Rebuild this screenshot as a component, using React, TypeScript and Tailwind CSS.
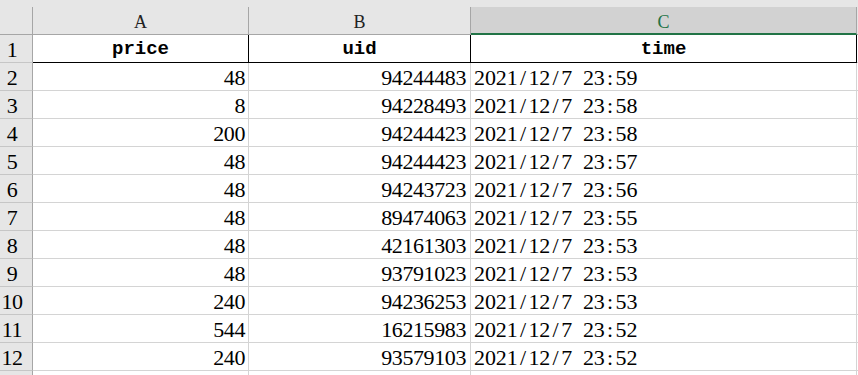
const rows: [number, number, string][] = [
  [48, 94244483, '2021/12/7 23:59'],
  [8, 94228493, '2021/12/7 23:58'],
  [200, 94244423, '2021/12/7 23:58'],
  [48, 94244423, '2021/12/7 23:57'],
  [48, 94243723, '2021/12/7 23:56'],
  [48, 89474063, '2021/12/7 23:55'],
  [48, 42161303, '2021/12/7 23:53'],
  [48, 93791023, '2021/12/7 23:53'],
  [240, 94236253, '2021/12/7 23:53'],
  [544, 16215983, '2021/12/7 23:52'],
  [240, 93579103, '2021/12/7 23:52'],
]

// SimSun-like half-width spacing for date strings
function HalfWidth({ text }: { text: string }) {
  return (
    <>
      {text.split('').map((c, i) => (
        <span key={i} className="inline-block w-[10.9px] text-center whitespace-pre">
          {c}
        </span>
      ))}
    </>
  )
}

const serif = "font-['Liberation_Serif',serif]"

export default function App() {
  return (
    <div className={`w-[858px] h-[375px] overflow-hidden bg-white text-black ${serif}`}>
      <div className="h-[7px] bg-[#e6e6e6]" />
      <div className="grid grid-cols-[33px_216px_222px_386px_1fr]">
        {/* column headers */}
        <div className="h-[28px] bg-[#e6e6e6] border-r border-b border-[#a6a6a6]" />
        <div className="h-[28px] bg-[#e6e6e6] border-r border-b border-[#a6a6a6] flex items-center justify-center pt-[4px] text-[18px] text-[#222]">
          A
        </div>
        <div className="h-[28px] bg-[#e6e6e6] border-r border-b border-[#a6a6a6] flex items-center justify-center pt-[4px] text-[18px] text-[#222]">
          B
        </div>
        <div className="h-[28px] bg-[#d2d2d2] border-r border-r-[#a6a6a6] border-b-2 border-b-[#217346] flex items-center justify-center pt-[5px] text-[18px] text-[#217346]">
          C
        </div>
        <div className="h-[28px] bg-[#e6e6e6] border-b border-[#a6a6a6]" />

        {/* row 1: field names */}
        <div className="h-[28px] bg-[#e6e6e6] border-r border-r-[#a6a6a6] border-b border-b-[#c6c6c6] flex items-center justify-center pr-[8px] pt-[2px] text-[22px] tracking-[-0.4px]">
          1
        </div>
        {['price', 'uid', 'time'].map((h) => (
          <div
            key={h}
            className="h-[28px] border-r border-b border-black flex items-center justify-center pt-[2px] font-['Liberation_Mono',monospace] font-bold text-[19px]"
          >
            {h}
          </div>
        ))}
        <div className="h-[28px] border-b border-[#d4d4d4]" />

        {rows.map(([price, uid, time], i) => (
          <div key={i} className="contents">
            <div className="h-[28px] bg-[#e6e6e6] border-r border-r-[#a6a6a6] border-b border-b-[#c6c6c6] flex items-center justify-center pr-[8px] pt-[2px] text-[22px] tracking-[-0.4px]">
              {i + 2}
            </div>
            <div className="h-[28px] border-r border-b border-[#d4d4d4] flex items-center justify-end pr-[3px] pt-[2px] text-[22px] tracking-[-0.4px]">
              {price}
            </div>
            <div className="h-[28px] border-r border-b border-[#d4d4d4] flex items-center justify-end pr-[4px] pt-[2px] text-[22px] tracking-[-0.4px]">
              {uid}
            </div>
            <div className="h-[28px] border-r border-b border-[#d4d4d4] flex items-center pl-[3px] pt-[2px] text-[22px]">
              <HalfWidth text={time} />
            </div>
            <div className="h-[28px] border-b border-[#d4d4d4]" />
          </div>
        ))}

        {/* partial row 13 */}
        <div className="h-[28px] bg-[#e6e6e6] border-r border-[#a6a6a6]" />
        <div className="h-[28px] border-r border-[#d4d4d4]" />
        <div className="h-[28px] border-r border-[#d4d4d4]" />
        <div className="h-[28px] border-r border-[#d4d4d4]" />
        <div className="h-[28px]" />
      </div>
    </div>
  )
}
